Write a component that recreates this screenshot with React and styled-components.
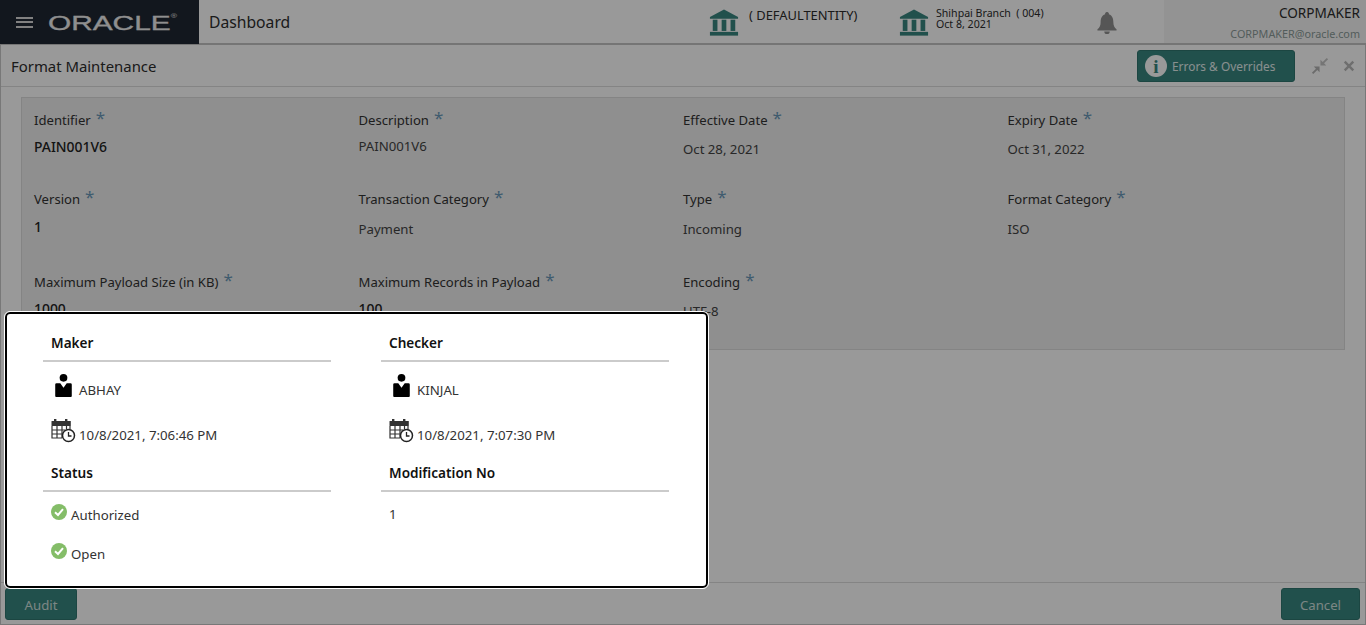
import React from "react";
import styled, { createGlobalStyle } from "styled-components";

const Global = createGlobalStyle`
  html, body { margin: 0; padding: 0; height: 100%; overflow: hidden; }
  body { font-family: "Noto Sans", "Open Sans", sans-serif; color: #2c2c2c; background: #fff; }
  * { box-sizing: border-box; }
`;

const Page = styled.div`
  width: 1366px; height: 625px; display: flex; flex-direction: column; position: relative; background: #fff; overflow: hidden;
`;
const Header = styled.header`
  height: 45px; display: flex; border-bottom: 2px solid #c4c4c4; flex: none; background: #fff;
`;
const Brand = styled.div`
  width: 199px; height: 44px; margin-bottom: -1px; background: #1f2732; display: flex; align-items: center; padding-left: 16px; flex: none;
`;
const Burger = styled.span`
  width: 17px; height: 11px; flex: none;
  border-top: 2px solid #d8d8d8; border-bottom: 2px solid #d8d8d8; position: relative;
  &::after { content: ""; position: absolute; left: 0; right: 0; top: 2.5px; height: 2px; background: #d8d8d8; }
`;
const Logo = styled.span`
  margin-left: 15px; display: inline-block; font: 400 21px/1 "Liberation Sans", sans-serif; color: #eeeeee;
  width: 128px; white-space: nowrap; transform: scaleX(1.42); transform-origin: left center; -webkit-text-stroke: 0.3px #eeeeee;
  sup { font-size: 6px; vertical-align: 12px; line-height: 0; -webkit-text-stroke: 0; }
`;
const PageTitle = styled.div`
  margin-left: 10px; font-size: 15.7px; line-height: 44px; width: 500px; flex: none; color: #2e2e2e;
`;
const EntityBlock = styled.div`
  display: flex; width: ${p => p.$w}px; flex: none; gap: ${p => p.$gap}px;
`;
const BankWrap = styled.span` flex: none; margin-top: 9px; width: 30px; height: 27px; `;
const EntityName = styled.div` font-size: 12.9px; line-height: 16px; padding-top: 7px; color: #2c2c2c; white-space: nowrap; `;
const BranchText = styled.div`
  font-size: 10.6px; line-height: 11px; padding-top: 8px; color: #2c2c2c; white-space: pre;
`;
const Bell = styled.span` width: 20px; height: 22px; flex: none; margin-top: 12px; `;
const UserBox = styled.div`
  margin-left: 47px; flex: 1; background: #f6f6f6; text-align: right; padding: 5px 6px 0 0; height: 43px;
`;
const UserName = styled.div` font-size: 13.6px; line-height: 16px; color: #2c2c2c; `;
const UserMail = styled.div` font-size: 10.8px; line-height: 14px; margin-top: 6px; color: #8a9a98; `;

const Main = styled.main`
  flex: 1; display: flex; flex-direction: column; border-left: 1px solid #c8c8c8; border-right: 1px solid #c8c8c8; border-bottom: 1px solid #c8c8c8; background: #fff;
`;
const TitleBar = styled.div`
  height: 42px; display: flex; align-items: center; padding: 0 10px 0 10px; border-bottom: 1px solid #dcdcdc; flex: none;
`;
const TitleText = styled.div` font-size: 14.9px; flex: 1; color: #2c2c2c; `;
const TealButton = styled.button`
  background: #38857f; border: 1px solid #30756f; border-radius: 3px; color: #e4f0ef; font-family: inherit; padding: 1px 0 0;
  display: inline-flex; align-items: center; justify-content: center;
`;
const ErrorsButton = styled(TealButton)`
  width: 158px; height: 32px; font-size: 11.9px; gap: 5px; margin-right: 16px; justify-content: flex-start; padding-left: 7px;
`;
const InfoDisc = styled.span`
  width: 22px; height: 22px; border-radius: 50%; background: #fff; color: #38857f; display: inline-flex; align-items: center; justify-content: center;
  font: 700 19px/1 "Liberation Serif", serif; flex: none;
`;
const ToolIcon = styled.span` display: inline-flex; width: ${p => p.$size}px; height: ${p => p.$size}px; margin-right: ${p => p.$mr || 0}px; `;
const Content = styled.div` flex: 1; padding: 10px 20px 0; `;
const FormPanel = styled.section`
  height: 253px; background: #eeeeee; border: 1px solid #dcdcdc; padding: 0 0 0 12px;
  display: grid; grid-template-columns: repeat(4, 324.5px); grid-template-rows: 79px 83px 80px; align-content: start;
`;
const Field = styled.div` padding-top: 12px; `;
const Label = styled.div`
  line-height: 20px; height: 20px; white-space: nowrap; color: #333; font-size: 13.1px;
`;
const Star = styled.span` color: #6a98b8; font-size: 17px; margin-left: 5px; position: relative; top: -1px; line-height: 0; `;
const Value = styled.div`
  line-height: 20px; margin-top: ${p => p.$mt}px; color: ${p => p.$strong ? "#222" : "#444"}; font-size: ${p => p.$strong ? "13.9px" : "13.2px"}; font-weight: ${p => p.$strong ? 500 : 400};
`;
const Footer = styled.div`
  height: 42px; border-top: 1px solid #dcdcdc; flex: none; display: flex; justify-content: space-between; align-items: flex-start; padding: 5px 5px 0 4px;
`;
const FootButton = styled(TealButton)` width: 72px; height: 32px; font-size: 13.2px; color: #cfe0de; `;
const CancelButton = styled(FootButton)` width: 79px; `;

const Scrim = styled.div` position: absolute; inset: 0; background: rgba(0,0,0,0.4); `;
const Popup = styled.div`
  position: absolute; left: 5px; top: 312px; width: 703px; height: 276px; background: #fff; border: 2px solid #000; outline: 1px solid #fff; border-radius: 5px;
  padding: 17px 0 0 36px; display: grid; grid-template-columns: 288px 288px; column-gap: 50px; grid-template-rows: 130px 110px; align-content: start;
`;
const Section = styled.div` display: flex; flex-direction: column; `;
const SectionHead = styled.div`
  font-size: 13.6px; font-weight: 600; line-height: 20px; height: 31px; padding: 2px 0 0 8px; border-bottom: 2px solid #cbcbcb; color: #111;
`;
const InfoRow = styled.div`
  display: flex; align-items: flex-end; padding-left: 8px; height: ${p => p.$h}px; font-size: 13.25px; color: #333; line-height: 20px;
`;
const RowIcon = styled.span` flex: none; display: inline-flex; margin: 0 ${p => p.$mr}px ${p => p.$mb}px ${p => p.$ml || 0}px; `;
const RowText = styled.span``;

const BankIcon = () => (
  <svg width="30" height="27" viewBox="0 0 32 28" fill="#38857f">
    <path d="M16 0 L31 8 V10 H1 V8 Z" />
    <rect x="4" y="11" width="5" height="12" />
    <rect x="13.5" y="11" width="5" height="12" />
    <rect x="23" y="11" width="5" height="12" />
    <rect x="1" y="24" width="30" height="4" />
  </svg>
);
const BellIcon = () => (
  <svg width="20" height="22" viewBox="0 0 22 26" fill="#8f8f8f" preserveAspectRatio="none">
    <path d="M11 0a2 2 0 0 1 2 2.6C17 4 18 8 18 12c0 4 1 6 3.5 8.5V22H.5v-1.5C3 18 4 16 4 12c0-4 1-8 5-9.4A2 2 0 0 1 11 0z" />
    <path d="M8 23h6a3 3 0 0 1-6 0z" />
  </svg>
);
const CompressIcon = () => (
  <svg width="18" height="18" viewBox="0 0 20 20">
    <path d="M17.5 1 L19 2.5 L14.5 7 L17 9.5 L10.5 9.5 L10.5 3 L13 5.5 Z" fill="#c4c4c4" />
    <path d="M2.5 19 L1 17.5 L5.5 13 L3 10.5 L9.5 10.5 L9.5 17 L7 14.5 Z" fill="#b4b4b4" />
  </svg>
);
const CloseIcon = () => (
  <svg width="12" height="12" viewBox="0 0 14 14" stroke="#b8b8b8" strokeWidth="2.8" fill="none">
    <path d="M2 2 L12 12 M12 2 L2 12" />
  </svg>
);
const PersonIcon = () => (
  <svg width="17" height="23" viewBox="0 0 18 25" fill="#000">
    <circle cx="9" cy="4.2" r="4.2" />
    <path d="M1.5 10 H5.5 L9 15 L12.5 10 H16.5 Q18 10 18 11.5 V24 Q18 25 17 25 H1 Q0 25 0 24 V11.5 Q0 10 1.5 10 Z" />
  </svg>
);
const CalClockIcon = () => (
  <svg width="25" height="24" viewBox="0 0 25 24">
    <g fill="#333">
      <rect x="0.5" y="2" width="19" height="5" rx="0.5" />
      <rect x="3" y="0" width="2.4" height="4" />
      <rect x="14" y="0" width="2.4" height="4" />
    </g>
    <path d="M1 7 V19 H11 M1 11 H14 M1 15 H11 M6 7 V19 M11 7 V19 M15.5 7 V10 M19 2 V10" stroke="#333" strokeWidth="1.2" fill="none" />
    <circle cx="17.5" cy="16.5" r="6" fill="#fff" stroke="#222" strokeWidth="1.5" />
    <path d="M17.5 13 V17 H20.5" stroke="#222" strokeWidth="1.3" fill="none" />
  </svg>
);
const CheckIcon = () => (
  <svg width="16" height="16" viewBox="0 0 16 16">
    <circle cx="8" cy="8" r="8" fill="#84bd68" />
    <path d="M4 8.3 L7 11 L12 5.2" stroke="#fff" strokeWidth="2" fill="none" />
  </svg>
);

const fields = [
  ["Identifier", "PAIN001V6", 7, true], ["Description", "PAIN001V6", 6], ["Effective Date", "Oct 28, 2021", 9], ["Expiry Date", "Oct 31, 2022", 9],
  ["Version", "1", 8, true], ["Transaction Category", "Payment", 10], ["Type", "Incoming", 10], ["Format Category", "ISO", 10],
  ["Maximum Payload Size (in KB)", "1000", 7, true], ["Maximum Records in Payload", "100", 7, true], ["Encoding", "UTF-8", 9],
];

const Person = ({ name, when, title }) => (
  <Section>
    <SectionHead>{title}</SectionHead>
    <InfoRow $h={38}><RowIcon $ml={4} $mr={7} $mb={3}><PersonIcon /></RowIcon><RowText>{name}</RowText></InfoRow>
    <InfoRow $h={45}><RowIcon $mr={3} $mb={2}><CalClockIcon /></RowIcon><RowText>{when}</RowText></InfoRow>
  </Section>
);

export default function App() {
  return (
    <Page>
      <Global />
      <Header>
        <Brand><Burger /><Logo>ORACLE<sup>®</sup></Logo></Brand>
        <PageTitle>Dashboard</PageTitle>
        <EntityBlock $w={190} $gap={10}>
          <BankWrap><BankIcon /></BankWrap>
          <EntityName>( DEFAULTENTITY)</EntityName>
        </EntityBlock>
        <EntityBlock $w={198} $gap={7}>
          <BankWrap><BankIcon /></BankWrap>
          <BranchText>{"Shihpai Branch  ( 004)\nOct 8, 2021"}</BranchText>
        </EntityBlock>
        <Bell><BellIcon /></Bell>
        <UserBox>
          <UserName>CORPMAKER</UserName>
          <UserMail>CORPMAKER@oracle.com</UserMail>
        </UserBox>
      </Header>
      <Main>
        <TitleBar>
          <TitleText>Format Maintenance</TitleText>
          <ErrorsButton><InfoDisc>i</InfoDisc>Errors &amp; Overrides</ErrorsButton>
          <ToolIcon $size={18} $mr={14}><CompressIcon /></ToolIcon>
          <ToolIcon $size={12}><CloseIcon /></ToolIcon>
        </TitleBar>
        <Content>
          <FormPanel>
            {fields.map(([l, v, mt, strong]) => (
              <Field key={l}>
                <Label>{l}<Star>*</Star></Label>
                <Value $mt={mt} $strong={strong}>{v}</Value>
              </Field>
            ))}
          </FormPanel>
        </Content>
        <Footer>
          <FootButton>Audit</FootButton>
          <CancelButton>Cancel</CancelButton>
        </Footer>
      </Main>
      <Scrim />
      <Popup>
        <Person title="Maker" name="ABHAY" when="10/8/2021, 7:06:46 PM" />
        <Person title="Checker" name="KINJAL" when="10/8/2021, 7:07:30 PM" />
        <Section>
          <SectionHead>Status</SectionHead>
          <InfoRow $h={33}><RowIcon $mr={4} $mb={5}><CheckIcon /></RowIcon><RowText>Authorized</RowText></InfoRow>
          <InfoRow $h={39}><RowIcon $mr={4} $mb={5}><CheckIcon /></RowIcon><RowText>Open</RowText></InfoRow>
        </Section>
        <Section>
          <SectionHead>Modification No</SectionHead>
          <InfoRow $h={32}><RowText>1</RowText></InfoRow>
        </Section>
      </Popup>
    </Page>
  );
}
